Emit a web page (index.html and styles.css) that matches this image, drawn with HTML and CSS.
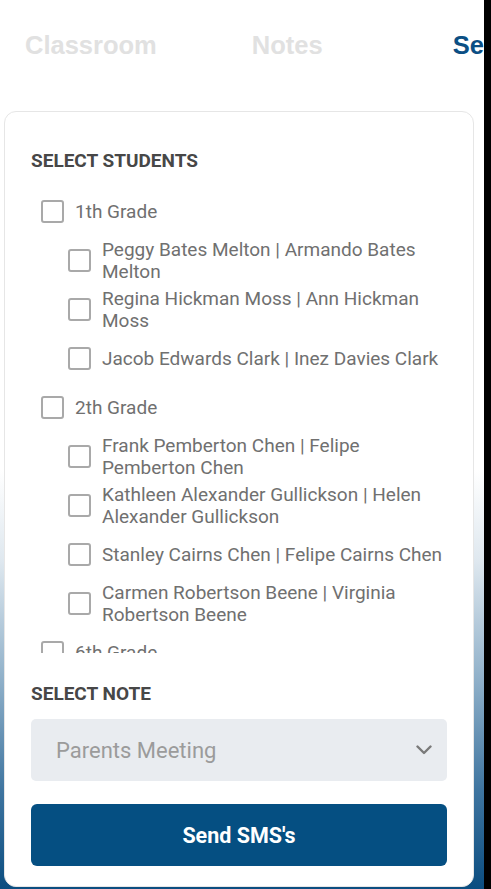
FILE: index.html
```html
<!DOCTYPE html>
<html>
<head>
<meta charset="utf-8">
<link rel="stylesheet" href="styles.css">
</head>
<body>
<div class="screen">
  <main class="app">
    <nav class="tabs">
      <span class="tab tab-classroom">Classroom</span>
      <span class="tab tab-notes">Notes</span>
      <span class="tab tab-active">Send SMS</span>
    </nav>
    <section class="card">
      <h2 class="section-title">SELECT STUDENTS</h2>
      <div class="student-list">
        <label class="row grade"><span class="box"></span><span class="text">1th Grade</span></label>
        <label class="row student"><span class="box"></span><span class="text">Peggy Bates Melton | Armando Bates Melton</span></label>
        <label class="row student"><span class="box"></span><span class="text">Regina Hickman Moss | Ann Hickman Moss</span></label>
        <label class="row student"><span class="box"></span><span class="text">Jacob Edwards Clark | Inez Davies Clark</span></label>
        <label class="row grade"><span class="box"></span><span class="text">2th Grade</span></label>
        <label class="row student"><span class="box"></span><span class="text">Frank Pemberton Chen | Felipe Pemberton Chen</span></label>
        <label class="row student"><span class="box"></span><span class="text">Kathleen Alexander Gullickson | Helen Alexander Gullickson</span></label>
        <label class="row student"><span class="box"></span><span class="text">Stanley Cairns Chen | Felipe Cairns Chen</span></label>
        <label class="row student"><span class="box"></span><span class="text">Carmen Robertson Beene | Virginia Robertson Beene</span></label>
        <label class="row grade"><span class="box"></span><span class="text">6th Grade</span></label>
        <label class="row student"><span class="box"></span><span class="text">Student Name | Parent Name</span></label>
      </div>
      <h2 class="section-title note-title">SELECT NOTE</h2>
      <div class="select">
        <span class="select-value">Parents Meeting</span>
        <svg class="chevron" width="16" height="10" viewBox="0 0 16 10"><path d="M1.5 1.5 L8 8 L14.5 1.5" fill="none" stroke="#7a7a7a" stroke-width="2.4" stroke-linecap="round" stroke-linejoin="round"/></svg>
      </div>
      <button class="send">Send SMS's</button>
    </section>
  </main>
  <div class="edge"></div>
</div>
</body>
</html>
```
FILE: styles.css
```css
* { box-sizing: border-box; }
html, body { margin: 0; padding: 0; }
body {
  width: 491px;
  height: 889px;
  overflow: hidden;
  font-family: Roboto, "Noto Sans", sans-serif;
}
.screen {
  display: flex;
  height: 889px;
}
.app {
  width: 484px;
  flex: none;
  height: 889px;
  overflow: hidden;
  background: linear-gradient(to bottom, #ffffff 0px, #ffffff 470px, #dfe8ef 560px, #8fb0c9 680px, #3f75a0 790px, #0b4d80 889px);
  display: flex;
  flex-direction: column;
}
.edge {
  flex: 1;
  background: #000;
}
.tabs {
  display: flex;
  align-items: center;
  height: 91px;
  padding-bottom: 1px;
  white-space: nowrap;
  overflow: hidden;
  font-family: "Liberation Sans", Arial, sans-serif;
  font-weight: bold;
  font-size: 25.5px;
}
.tab { color: #e1e1e1; flex: none; }
.tab-classroom { margin-left: 25px; }
.tab-notes { margin-left: 95px; }
.tab-active { margin-left: 130px; color: #0b4f84; }
.card {
  margin: 20px 10px 0 4px;
  background: #fff;
  border: 1px solid #e6e6e6;
  border-radius: 12px;
  padding: 39px 26px 20px 26px;
  display: flex;
  flex-direction: column;
}
.section-title {
  margin: 0;
  font-size: 19px;
  line-height: 20px;
  font-weight: 700;
  color: #474747;
}
.student-list {
  margin-top: 16px;
  height: 466px;
  overflow: hidden;
  display: flex;
  flex-direction: column;
}
.row {
  display: flex;
  align-items: center;
  min-height: 49px;
  flex: none;
  font-size: 19px;
  line-height: 22px;
  color: #707070;
}
.box {
  width: 23px;
  height: 23px;
  border: 2px solid #a9a9a9;
  border-radius: 3px;
  flex: none;
}
.grade { padding-left: 10px; }
.grade .box { margin-right: 11px; }
.student { padding-left: 37px; }
.student .box { margin-right: 11px; }
.student .text { flex: 1; }
.note-title { margin-top: 31px; }
.select {
  margin-top: 15px;
  height: 62px;
  background: #e9ecf0;
  border-radius: 5px;
  display: flex;
  align-items: center;
  justify-content: space-between;
  padding: 0 15px 0 25px;
}
.select-value {
  font-size: 22px;
  color: #9b9b9b;
}
.send {
  margin-top: 23px;
  height: 62px;
  border: none;
  border-radius: 6px;
  background: #054f82;
  color: #fff;
  font-family: Roboto, "Noto Sans", sans-serif;
  font-weight: 700;
  font-size: 21.5px;
}
```
